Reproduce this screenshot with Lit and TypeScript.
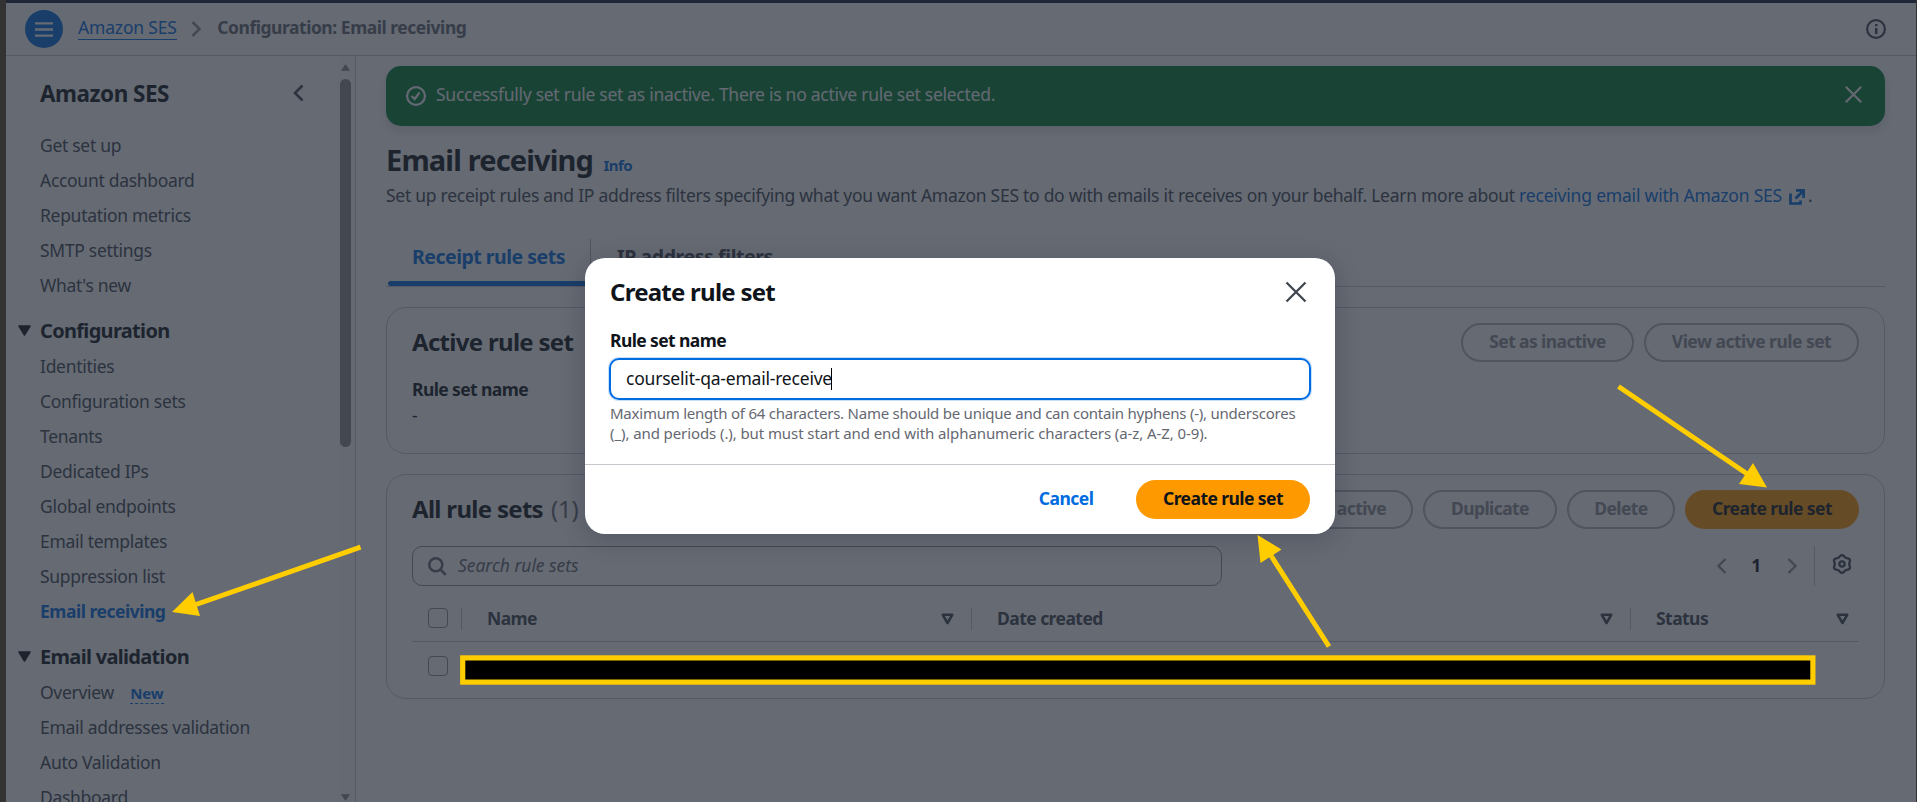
import { LitElement, html, svg, css } from "lit";
import { customElement } from "lit/decorators.js";
import { classMap } from "lit/directives/class-map.js";

/* Six-lobed outline for the settings icon, on a 20x20 grid. */
const gearPath = (() => {
  const pts: string[] = [];
  for (let i = 0; i < 72; i++) {
    const a = (i * 5 * Math.PI) / 180;
    const r = 8.05 + 0.85 * Math.cos(6 * (a - Math.PI / 2));
    pts.push(`${(10 + r * Math.cos(a)).toFixed(2)} ${(10 + r * Math.sin(a)).toFixed(2)}`);
  }
  return `M${pts.join("L")}Z`;
})();

const icons = {
  menu: svg`<path d="M1 2.300H19M1 8.500H19M1 14.700H19" />`,
  chevronRight: svg`<path d="M1.500 1 8.500 8 1.500 15" />`,
};

const topLinks = ["Get set up", "Account dashboard", "Reputation metrics", "SMTP settings", "What's new"];
const configLinks = [
  "Identities",
  "Configuration sets",
  "Tenants",
  "Dedicated IPs",
  "Global endpoints",
  "Email templates",
  "Suppression list",
  "Email receiving",
];

@customElement("ses-sidebar")
class SesSidebar extends LitElement {
  static styles = css`
    :host {
      display: flex;
      width: 350px;
      box-sizing: border-box;
      flex: none;
      border-right: 1px solid #c6c6cd;
      overflow: hidden;
      color: #424650;
      letter-spacing: -0.3px;
    }
    .nav { flex: 1; padding-left: 34px; overflow: hidden; }
    .title {
      display: flex; justify-content: space-between; align-items: center;
      height: 72px; box-sizing: border-box; padding: 3px 30px 0 0;
      font-size: 22.5px; font-weight: 700; color: #0f141a; letter-spacing: -0.5px;
    }
    .title svg { display: block; margin-top: -2px; }
    .item { height: 35px; line-height: 35px; white-space: nowrap; }
    .item.on { color: #006ce0; font-weight: 700; letter-spacing: -0.48px; }
    .group {
      box-sizing: border-box; height: 46px; padding-top: 8px; line-height: 37px;
      font-size: 20px; font-weight: 700; color: #0f141a; letter-spacing: -0.68px;
      display: flex; align-items: center; margin-left: -22.500px; gap: 9.500px;
    }
    .group svg { display: block; }
    .new {
      margin-left: 12px; font-size: 15px; font-weight: 700; color: #006ce0;
      line-height: 20px; display: inline-block; border-bottom: 1px dashed #006ce0; letter-spacing: -0.1px;
    }
    .rail {
      width: 17px; flex: none; background: #fafafa; display: flex; flex-direction: column;
      align-items: center; box-sizing: border-box; padding: 8px 3px 1px 0;
    }
    .rail svg { display: block; flex: none; }
    .thumb { width: 11px; height: 368px; border-radius: 6px; background: #8b8b8b; margin: 8px 0 auto; flex: none; }
  `;
  item(label: string) {
    return html`<div class=${classMap({ item: true, on: label === "Email receiving" })}>${label}</div>`;
  }
  group(label: string) {
    return html`<div class="group">
      <svg width="13" height="11" viewBox="0 0 13 11"><path d="M1 1H12L6.500 10Z" fill="#0f141a" stroke="#0f141a" stroke-width="1.5" stroke-linejoin="round" /></svg>
      <span>${label}</span>
    </div>`;
  }
  render() {
    return html`
      <div class="nav">
        <div class="title">
          <span>Amazon SES</span>
          <svg width="18" height="18" viewBox="0 0 18 18"><path d="M12.500 1.500 5 9l7.500 7.500" fill="none" stroke="#424650" stroke-width="2.500" /></svg>
        </div>
        ${topLinks.map((l) => this.item(l))} ${this.group("Configuration")}
        ${configLinks.map((l) => this.item(l))} ${this.group("Email validation")}
        <div class="item">Overview <span class="new">New</span></div>
        ${["Email addresses validation", "Auto Validation", "Dashboard"].map((l) => this.item(l))}
      </div>
      <div class="rail">
        <svg width="9" height="7" viewBox="0 0 9 7"><path d="M4.500 .8 8.300 6.300H.7Z" fill="#8b8b8b" stroke="#8b8b8b" stroke-linejoin="round" /></svg>
        <div class="thumb"></div>
        <svg width="9" height="7" viewBox="0 0 9 7"><path d="M4.500 6.200 8.300 .7H.7Z" fill="#8b8b8b" stroke="#8b8b8b" stroke-linejoin="round" /></svg>
      </div>
    `;
  }
}

@customElement("rule-dialog")
class RuleDialog extends LitElement {
  static styles = css`
    :host {
      display: block; width: 750px; height: 276px; box-sizing: border-box;
      background: #fff; border-radius: 20px; color: #0f141a;
      box-shadow: 0 5px 25px 2px rgba(0, 7, 22, 0.17);
    }
    .head { display: flex; justify-content: space-between; padding: 15px 26.500px 0 25px; height: 38px; }
    h2 { margin: 0; font-size: 24px; line-height: 38px; letter-spacing: -0.75px; font-weight: 700; }
    .head svg { display: block; margin-top: 6px; }
    .body { padding: 17px 24px 0; height: 136px; }
    label { display: block; padding-left: 1px; font-weight: 700; line-height: 25px; letter-spacing: -0.6px; }
    .input {
      display: flex; align-items: center; box-sizing: border-box; height: 42px; margin-top: 5px;
      border: 2px solid #006ce0; border-radius: 10px; padding: 0 0 1px 15px; letter-spacing: -0.21px;
      box-shadow: 0 0 0 1px rgba(0, 108, 224, 0.22);
    }
    .caret { width: 1px; height: 22px; background: #000; margin-left: -1px; }
    .hint { margin: 3px 0 0 1px; font-size: 15px; line-height: 20px; color: #656871; letter-spacing: -0.233px; white-space: nowrap; }
    .hint span { letter-spacing: -0.09px; }
    .foot {
      box-sizing: border-box; height: 70px; border-top: 1px solid #c6c6cd; display: flex;
      justify-content: flex-end; padding: 15px 25px 0 0; font-weight: 700; line-height: 37px; letter-spacing: -0.57px;
    }
    .cancel { color: #006ce0; margin-right: 42.500px; letter-spacing: -0.5px; }
    .primary { width: 174px; height: 39px; border-radius: 20px; background: #ff9900; text-align: center; }
  `;
  render() {
    return html`
      <div class="head">
        <h2>Create rule set</h2>
        <svg width="26" height="26" viewBox="0 0 26 26"><path d="M3.500 3.500 22.500 22.500M22.500 3.500 3.500 22.500" stroke="#424650" stroke-width="2.300" /></svg>
      </div>
      <div class="body">
        <label>Rule set name</label>
        <div class="input"><span>courselit-qa-email-receive</span><span class="caret"></span></div>
        <div class="hint">
          Maximum length of 64 characters. Name should be unique and can contain hyphens (-), underscores<br /><span
            >(_), and periods (.), but must start and end with alphanumeric characters (a-z, A-Z, 0-9).</span
          >
        </div>
      </div>
      <div class="foot">
        <span class="cancel">Cancel</span>
        <span class="primary">Create rule set</span>
      </div>
    `;
  }
}

@customElement("app-root")
class AppRoot extends LitElement {
  static styles = css`
    :host {
      display: grid; grid-template-columns: 6px 1fr 1px; position: relative;
      height: 802px; overflow: hidden; background: #333;
      font: 400 17.5px/25px "Noto Sans", "Open Sans", sans-serif; letter-spacing: -0.273px; color: #424650;
    }
    svg { display: block; flex: none; }
    .console { grid-column: 2; height: 802px; display: flex; flex-direction: column; background: #fff; overflow: hidden; position: relative; }
    .strip { height: 3px; flex: none; background: #161d30; }
    .crumbs {
      height: 53px; flex: none; box-sizing: border-box; border-bottom: 1px solid #c6c6cd;
      display: flex; align-items: center; padding: 0 30px 0 19px;
    }
    .menu { width: 38px; height: 38px; border-radius: 50%; background: #006ce0; display: grid; place-items: center; }
    .crumb {
      margin: 0 14.500px 0 15px; height: 21px; border-bottom: 1px solid #006ce0; color: #006ce0;
      display: flex; align-items: center; letter-spacing: -0.17px;
    }
    .crumb span { margin-top: -3px; }
    .crumb.here { border: 0; color: #656871; font-weight: 700; letter-spacing: -0.47px; flex: 1; margin-left: 14px; }
    .body { flex: 1; display: flex; min-height: 0; }
    main { flex: 1; padding: 10px 31px 0 30px; }

    .flash {
      height: 60px; border-radius: 15px; background: #00802f; color: #f9f9fa; display: flex; align-items: center;
      padding: 0 23.500px 0 20px; box-sizing: border-box; box-shadow: 0 5px 10px 1px rgba(0, 7, 22, 0.12);
    }
    .flash p { margin: -3px 0 0 10px; flex: 1; }
    .flash .close { margin-top: -3px; }
    .heading { display: flex; align-items: baseline; margin-top: 15px; height: 43px; }
    h1 { margin: 0; font-size: 29px; line-height: 38px; letter-spacing: -0.85px; color: #0f141a; }
    .info { font-size: 15px; font-weight: 700; color: #006ce0; margin-left: 10.500px; letter-spacing: -0.55px; }
    .desc { display: flex; align-items: center; height: 25px; margin-top: -1px; white-space: pre; letter-spacing: -0.272px; }
    .desc a { color: #006ce0; letter-spacing: -0.2px; }
    .desc svg { margin: 2px 3px 0 7px; }
    .tabs {
      display: flex; margin-top: 24px; height: 55px; box-sizing: border-box; border-bottom: 1px solid #c6c6cd;
      font-size: 19.5px; font-weight: 700; letter-spacing: -0.5px; line-height: 26px;
    }
    .tab { width: 205px; box-sizing: border-box; padding: 12px 0 0 26px; position: relative; display: flex; white-space: nowrap; }
    .tab:not(.on) { letter-spacing: -0.42px; }
    .tab.on { color: #006ce0; }
    .tab.on::before { content: ""; position: absolute; left: 2px; right: 0; bottom: 0; height: 5px; border-radius: 3px; background: #006ce0; }
    .tab.on::after { content: ""; width: 1px; height: 30px; margin: -5px 0 0 auto; background: #b4b4bb; }

    .card { border: 1px solid #c6c6cd; border-radius: 20px; box-sizing: border-box; margin-top: 20px; padding: 15px 25px 0; }
    .card.active { height: 147px; }
    .card.all { height: 225px; }
    .cardhead { display: flex; align-items: center; gap: 10px; height: 39px; }
    h2 { margin: -2px auto 0 0; font-size: 24px; line-height: 30px; color: #0f141a; letter-spacing: -0.7px; white-space: nowrap; }
    h2 span { font-weight: 400; color: #656871; letter-spacing: -0.2px; margin-left: 2.500px; }
    .btn {
      height: 39px; box-sizing: border-box; border: 2px solid #b4b4bb; border-radius: 20px; padding: 0 22px;
      line-height: 33px; font-weight: 700; color: #8c8c94; letter-spacing: -0.6px; text-align: center; white-space: nowrap;
    }
    .btn.w173 { width: 173px; }
    .btn.w215 { width: 215px; letter-spacing: -0.52px; }
    .btn.w150 { width: 155px; }
    .btn.w134 { width: 134px; }
    .btn.w108 { width: 108px; }
    .btn.primary { width: 174px; background: #ff9900; border-color: #ff9900; color: #0f141a; letter-spacing: -0.57px; }
    .key { margin-top: 15px; font-weight: 700; color: #0f141a; letter-spacing: -0.6px; }
    .val { margin-top: 1px; color: #0f141a; }

    .tools { display: flex; align-items: center; margin-top: 17px; height: 40px; }
    .search {
      width: 810px; height: 40px; box-sizing: border-box; border: 1px solid #8c8c94; border-radius: 10px;
      display: flex; align-items: center; gap: 11px; padding-left: 15px; font-style: italic; color: #656871;
      margin-right: auto; letter-spacing: -0.05px;
    }
    .search span { margin-top: -2px; }
    .pager { display: flex; align-items: center; height: 40px; padding-right: 17px; border-right: 1px solid #c6c6cd; margin-right: 17px; }
    .pager b { color: #0f141a; margin: -2px 26px 0 24px; width: 10px; text-align: center; }
    .gear { margin: -4px 7px 0 0; }

    .row { display: flex; align-items: center; }
    .row.head { height: 56px; border-bottom: 1px solid #c6c6cd; box-sizing: border-box; font-weight: 700; letter-spacing: -0.55px; }
    .box { width: 20px; height: 20px; box-sizing: border-box; border: 1.5px solid #8c8c94; border-radius: 4px; margin-left: 16px; flex: none; }
    .row.head .box { margin-top: 9px; margin-right: 13px; }
    .col { display: flex; align-items: center; height: 22px; margin-top: 10px; border-left: 1px solid #c6c6cd; padding: 0 17px 0 25px; box-sizing: border-box; justify-content: space-between; }
    .c1 { width: 510px; }
    .c2 { width: 659px; }
    .c3 { flex: 1; padding-right: 10px; }
    .row.data { height: 48px; }

    .veil { position: absolute; inset: 0; background: rgba(35, 43, 55, 0.7); }
    rule-dialog { position: absolute; left: 579px; top: 258px; }
    .marks { position: absolute; inset: 0; }
  `;
  caret() {
    return html`<svg width="13" height="12" viewBox="0 0 13 12"><path d="M1.800 1.800H11.200L6.500 10Z" fill="none" stroke="#424650" stroke-width="2.600" stroke-linejoin="round" /></svg>`;
  }
  render() {
    return html`
      <div class="console">
        <div class="strip"></div>
        <div class="crumbs">
          <div class="menu"><svg width="20" height="17" viewBox="0 0 20 17" fill="none" stroke="#fff" stroke-width="2.300">${icons.menu}</svg></div>
          <div class="crumb"><span>Amazon SES</span></div>
          <svg width="12" height="16" viewBox="0 0 12 16" fill="none" stroke="#8c8c94" stroke-width="2.500">${icons.chevronRight}</svg>
          <div class="crumb here"><span>Configuration: Email receiving</span></div>
          <svg width="20" height="20" viewBox="0 0 20 20"><circle cx="10" cy="10" r="8.900" fill="none" stroke="#424650" stroke-width="2.200" /><path d="M10.200 9V15M10.200 5V7.300" stroke="#424650" stroke-width="2.500" /></svg>
        </div>
        <div class="body">
          <ses-sidebar></ses-sidebar>
          <main>
            <div class="flash">
              <svg width="20" height="20" viewBox="0 0 20 20" fill="none" stroke="#f9f9fa" stroke-width="2.200"><circle cx="10" cy="10" r="8.900" /><path d="M5.500 10 8.700 13 13.500 6.500" /></svg>
              <p>Successfully set rule set as inactive. There is no active rule set selected.</p>
              <svg class="close" width="17" height="17" viewBox="0 0 17 17" stroke="#f9f9fa" stroke-width="2.200"><path d="M.8 .8 16.200 16.200M16.200 .8 .8 16.200" /></svg>
            </div>
            <div class="heading"><h1>Email receiving</h1><span class="info">Info</span></div>
            <div class="desc"><span>Set up receipt rules and IP address filters specifying what you want Amazon SES to do with emails it receives on your behalf. Learn more about </span><a>receiving email with Amazon SES</a><svg width="16" height="16" viewBox="0 0 16 16" fill="none" stroke="#006ce0" stroke-width="2.700"><path d="M7 1.400H14.600V9M14.300 1.700 6.500 9.500M1.500 4.500V14.500H11.500V11.500" /></svg><span>.</span></div>
            <div class="tabs">
              <div class="tab on">Receipt rule sets</div>
              <div class="tab">IP address filters</div>
            </div>
            <div class="card active">
              <div class="cardhead">
                <h2>Active rule set</h2>
                <div class="btn w173">Set as inactive</div>
                <div class="btn w215">View active rule set</div>
              </div>
              <div class="key">Rule set name</div>
              <div class="val">-</div>
            </div>
            <div class="card all">
              <div class="cardhead">
                <h2>All rule sets <span>(1)</span></h2>
                <div class="btn w150">Set as active</div>
                <div class="btn w134">Duplicate</div>
                <div class="btn w108">Delete</div>
                <div class="btn primary">Create rule set</div>
              </div>
              <div class="tools">
                <div class="search">
                  <svg width="19" height="19" viewBox="0 0 19 19" fill="none" stroke="#656871" stroke-width="2.500"><circle cx="7.800" cy="7.800" r="6.500" /><path d="M12.300 12.300 17.800 17.800" /></svg>
                  <span>Search rule sets</span>
                </div>
                <div class="pager">
                  <svg width="10" height="16" viewBox="0 0 10 16" fill="none" stroke="#8c8c94" stroke-width="2.300"><path d="M8.500 1 1.500 8 8.500 15" /></svg>
                  <b>1</b>
                  <svg width="10" height="16" viewBox="0 0 10 16" fill="none" stroke="#8c8c94" stroke-width="2.300"><path d="M1.500 1 8.500 8 1.500 15" /></svg>
                </div>
                <svg class="gear" width="20" height="20" viewBox="0 0 20 20" fill="none" stroke="#424650" stroke-width="2.300"><path d=${gearPath} /><circle cx="10" cy="10" r="2.600" /></svg>
              </div>
              <div class="row head">
                <div class="box"></div>
                <div class="col c1"><span>Name</span>${this.caret()}</div>
                <div class="col c2"><span>Date created</span>${this.caret()}</div>
                <div class="col c3"><span>Status</span>${this.caret()}</div>
              </div>
              <div class="row data"><div class="box"></div></div>
            </div>
          </main>
        </div>
        <div class="veil"></div>
        <rule-dialog></rule-dialog>
      </div>
      <svg class="marks" width="1917" height="802" viewBox="0 0 1917 802" fill="#ffcd00" stroke="none">
        <rect x="462.700" y="657.900" width="1350.200" height="24.200" fill="#000" stroke="#ffcd00" stroke-width="5.200" />
        <path d="M360.500 547.200 196 604.500M1618.500 386.500 1748 474.500M1329 646.500 1270 554" stroke="#ffcd00" stroke-width="5" />
        <path d="M172 612 192.500 592 200 616ZM1767 487.500 1753 463 1739 484ZM1257.500 535 1281.500 549.500 1260.500 563Z" />
      </svg>
    `;
  }
}
